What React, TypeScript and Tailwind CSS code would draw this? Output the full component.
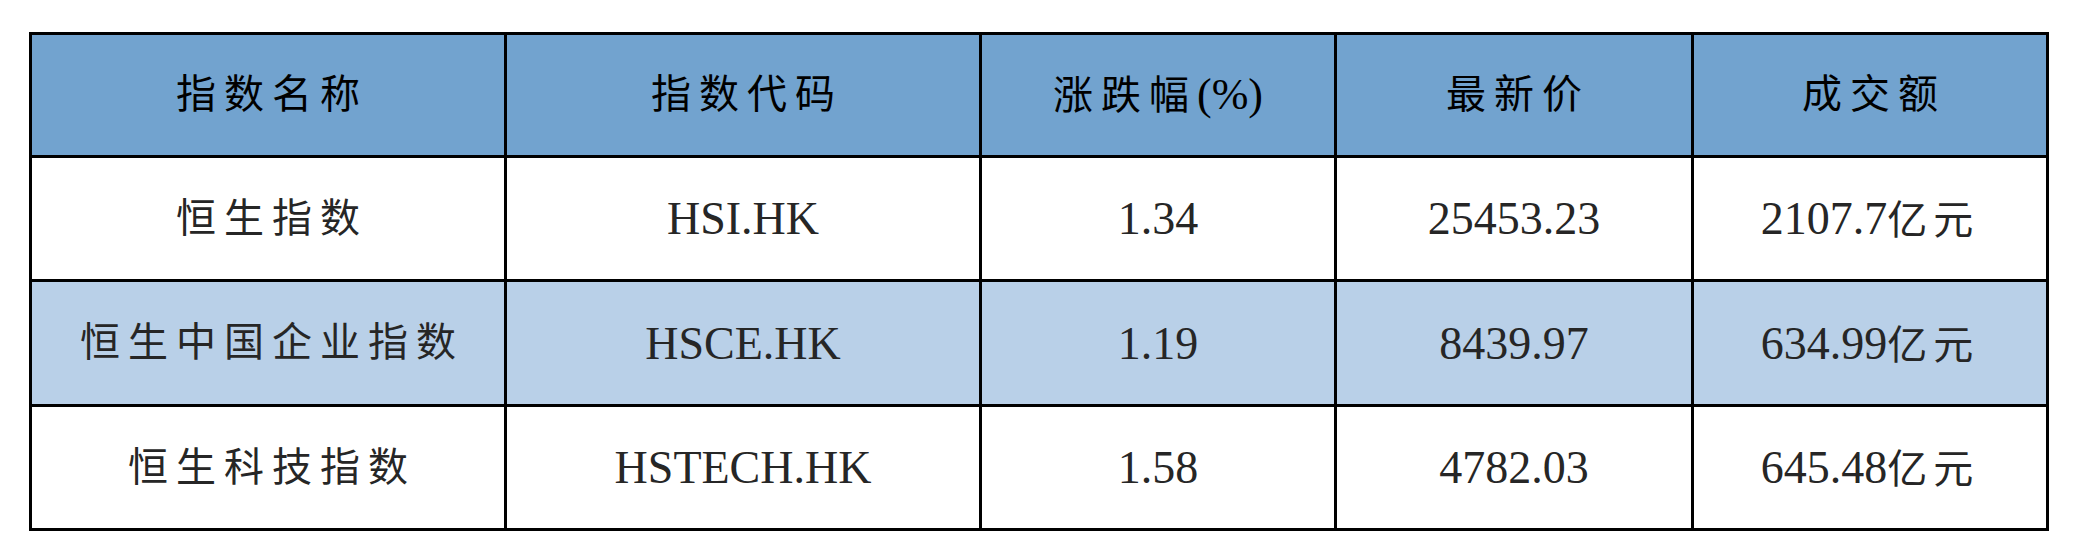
const headers = ['指数名称', '指数代码', '涨跌幅', '最新价', '成交额'];

const rows = [
    ['恒生指数', 'HSI.HK', '1.34', '25453.23', '2107.7'],
    ['恒生中国企业指数', 'HSCE.HK', '1.19', '8439.97', '634.99'],
    ['恒生科技指数', 'HSTECH.HK', '1.58', '4782.03', '645.48'],
];

const widths = ['w-[475px]', 'w-[475px]', 'w-[355px]', 'w-[357px]', 'w-[355px]'];

const font = "font-['Liberation_Serif','Noto_Sans_CJK_SC',serif]";

export default function App() {
    return (
        <div className="h-[560px] w-[2075px] bg-white pt-[32px] pl-[29px]">
            <table className={`border-collapse border-[3px] border-black ${font}`}>
                <thead>
                    <tr className="h-[123px] bg-[#72a3cf]">
                        {headers.map((h, i) => (
                            <th
                                key={h}
                                className={`${widths[i]} border-[3px] border-black text-center text-[40px] font-normal text-black`}
                            >
                                <span className={i === 2 ? 'tracking-[8px]' : 'pl-[8px] tracking-[8px]'}>{h}</span>
                                {i === 2 && <span className="text-[44px] tracking-normal">(%)</span>}
                            </th>
                        ))}
                    </tr>
                </thead>
                <tbody>
                    {rows.map((row, r) => (
                        <tr key={row[0]} className={r === 1 ? 'h-[125px] bg-[#b9d0e8]' : 'h-[124px] bg-white'}>
                            {row.map((cell, i) => (
                                <td
                                    key={i}
                                    className={`${widths[i]} border-[3px] border-black text-center text-[#262626] ${
                                        i === 0 ? 'text-[40px] tracking-[8px]' : 'text-[46px]'
                                    }`}
                                >
                                    {i === 0 ? <span className="pl-[8px]">{cell}</span> : cell}
                                    {i === 4 && <span className="text-[40px] tracking-[6px]">亿元</span>}
                                </td>
                            ))}
                        </tr>
                    ))}
                </tbody>
            </table>
        </div>
    );
}
